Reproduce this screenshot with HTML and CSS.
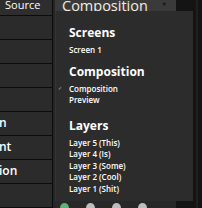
FILE: index.html
```html
<!DOCTYPE html>
<html>
	<head>
		<meta charset="UTF-8">
		<title>Composition</title>
		<link rel="stylesheet" href="styles.css">
	</head>
	<body>
		<div id="wrap">
			<div class="left">
				<div class="head">Source</div>
				<ul>
					<li></li>
					<li></li>
					<li></li>
					<li></li>
					<li><span>n</span></li>
					<li><span>nt</span></li>
					<li><span>ion</span></li>
					<li></li>
				</ul>
			</div>
			<div class="gutter"></div>
			<div class="main">
				<div class="bar">
					<span class="name">Composition</span>
					<span class="arrow">▼</span>
				</div>
				<div class="stage">
					<div class="dots">
						<i class="on"></i>
						<i></i>
						<i></i>
						<i></i>
					</div>
				</div>
			</div>
			<div class="right">
				<div class="stripe"></div>
			</div>

			<!--dropdown-->
			<div class="menu">
				<h3>Screens</h3>
				<ul class="screens">
					<li>Screen 1</li>
				</ul>
				<h3>Composition</h3>
				<ul class="comps">
					<li class="checked">Composition</li>
					<li>Preview</li>
				</ul>
				<h3>Layers</h3>
				<ul>
					<li>Layer 5 (This)</li>
					<li>Layer 4 (Is)</li>
					<li>Layer 3 (Some)</li>
					<li>Layer 2 (Cool)</li>
					<li>Layer 1 (Shit)</li>
				</ul>
			</div>
		</div>
	</body>
</html>
```

FILE: styles.css
```css
body,
ul,
h3 {
	margin: 0;
	padding: 0;
}

li {
	list-style: none;
}

body {
	background: #111;
	font-family: "Open Sans", "DejaVu Sans", sans-serif;
	color: #fff;
	overflow: hidden;
}

#wrap {
	position: relative;
	display: flex;
	width: 202px;
	height: 208px;
	overflow: hidden;
}

/*left list*/
.left {
	width: 52px;
	background: #2b2b2b;
	border-right: 1px solid #0c0c0c;
}

.left .head {
	height: 15px;
	line-height: 10px;
	padding-left: 5px;
	font-size: 11px;
	background: #2e2e2e;
	border-bottom: 1px solid #0c0c0c;
}

.left li {
	height: 23px;
	line-height: 22px;
	border-bottom: 1px solid #0c0c0c;
	font-size: 12px;
	font-weight: 600;
	white-space: nowrap;
}

.left li span {
	margin-left: -1px;
}

.gutter {
	width: 2px;
	background: #262626;
}

/*middle*/
.main {
	width: 121px;
	display: flex;
	flex-direction: column;
	background: #282828;
}

.bar {
	height: 16px;
	display: flex;
	align-items: flex-start;
	background: #3a3a3a;
}

.bar .name {
	padding-left: 7px;
	font-size: 14.5px;
	line-height: 12px;
	color: #f3ece0;
}

.bar .arrow {
	margin-left: auto;
	margin-right: 10px;
	margin-top: 1px;
	font-size: 5px;
	color: #1a1a1a;
}

.stage {
	flex: 1;
	display: flex;
	align-items: flex-end;
}

.dots {
	display: flex;
	gap: 17px;
	padding-left: 5px;
	margin-bottom: -5px;
}

.dots i {
	display: block;
	width: 9px;
	height: 10px;
	border-radius: 50%;
	background: #bdbdbd;
}

.dots i.on {
	background: #5fb07a;
}

/*right*/
.right {
	flex: 1;
	display: flex;
	justify-content: flex-end;
	background: #141414;
}

.right .stripe {
	width: 2px;
	margin-right: 4px;
	background: #202020;
}

/*menu*/
.menu {
	position: absolute;
	left: 55px;
	top: 11px;
	width: 138px;
	height: 190px;
	box-sizing: border-box;
	padding: 14px 0 0 13px;
	background: #2c2c2c;
	border-left: 1px solid #333;
}

.menu h3 {
	font-size: 12px;
	font-weight: 700;
	line-height: 16px;
	margin-bottom: 3px;
}

.menu ul {
	margin-bottom: 10px;
}

.menu ul.screens {
	margin-bottom: 8px;
}

.menu ul.comps {
	margin-bottom: 12px;
}

.menu li {
	position: relative;
	font-size: 8px;
	font-weight: 600;
	line-height: 11.5px;
}

.menu li.checked:before {
	content: "✓";
	position: absolute;
	left: -11px;
	top: 0;
	font-size: 5px;
	color: #bbb;
}
```
